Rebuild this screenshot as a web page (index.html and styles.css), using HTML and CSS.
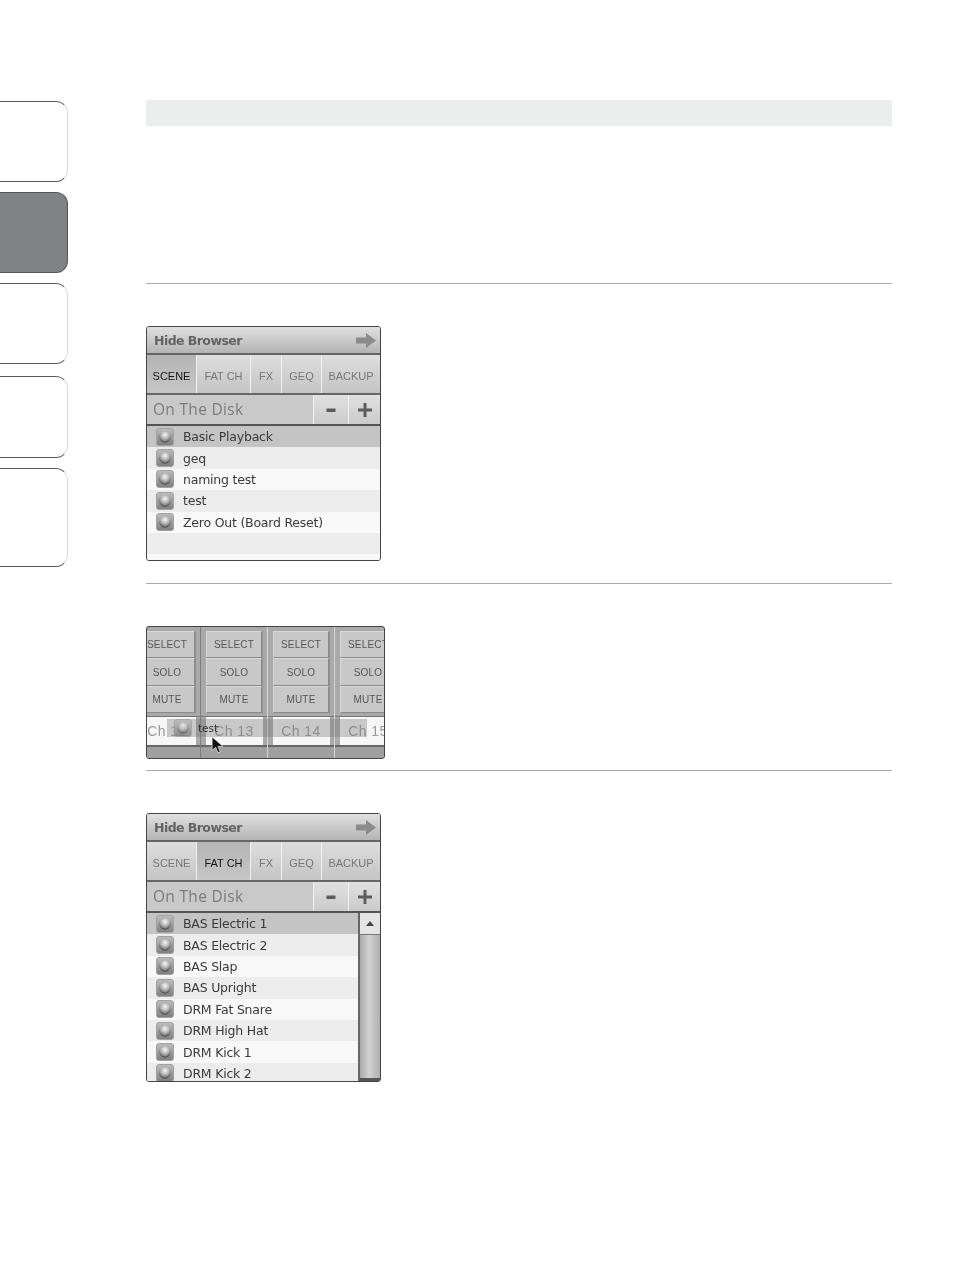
FILE: index.html
```html
<!DOCTYPE html>
<html>
<head>
    <title>Browser Panels</title>
    <link rel="stylesheet" href="styles.css">
</head>
<body>
    <svg class="defs" width="0" height="0">
        <defs>
            <linearGradient id="tile" x1="0" y1="0" x2="0" y2="1">
                <stop offset="0" stop-color="#bdbdbd"/>
                <stop offset="1" stop-color="#7d7d7d"/>
            </linearGradient>
            <radialGradient id="ball" cx="50%" cy="30%" r="72%">
                <stop offset="0" stop-color="#f6f6f6"/>
                <stop offset="0.5" stop-color="#b4b4b4"/>
                <stop offset="1" stop-color="#3a3a3a"/>
            </radialGradient>
            <symbol id="preset" viewBox="0 0 18 18">
                <rect x="0.5" y="0.5" width="17" height="17" rx="2.5" fill="url(#tile)" stroke="#a2a2a2"/>
                <circle cx="9" cy="9" r="5.800" fill="url(#ball)"/>
                <path d="M5 11a5 3.500 0 0 0 8 0a6 4.500 0 0 1-8 0z" fill="#dcdcdc"/>
            </symbol>
            <symbol id="arrow" viewBox="0 0 20 15">
                <path d="M0 4.500h10V0l10 7.500-10 7.500v-4.500H0z" fill="#8b8b8b"/>
            </symbol>
            <symbol id="minus" viewBox="0 0 14 14">
                <rect x="2.500" y="5.500" width="9" height="3.500" fill="#5c5c5c"/>
            </symbol>
            <symbol id="plus" viewBox="0 0 14 14">
                <path d="M5.500 0h3v5.500H14v3H8.500V14h-3V8.500H0v-3h5.500z" fill="#5c5c5c"/>
            </symbol>
        </defs>
    </svg>

    <div class="page">
        <div class="sidebar">
            <div class="side-tab"></div>
            <div class="side-tab active"></div>
            <div class="side-tab"></div>
            <div class="side-tab tall"></div>
            <div class="side-tab taller"></div>
        </div>

        <div class="main">
            <div class="band"></div>

            <div class="section first">
                <div class="panel short">
                    <div class="hide-bar">
                        <span>Hide Browser</span>
                        <svg class="arrow"><use href="#arrow"/></svg>
                    </div>
                    <div class="tabs">
                        <div class="tab t-scene selected">SCENE</div>
                        <div class="tab t-fat">FAT CH</div>
                        <div class="tab t-fx">FX</div>
                        <div class="tab t-geq">GEQ</div>
                        <div class="tab t-backup">BACKUP</div>
                    </div>
                    <div class="disk-bar">
                        <div class="disk-name">On The Disk</div>
                        <div class="disk-btn"><svg><use href="#minus"/></svg></div>
                        <div class="disk-btn"><svg><use href="#plus"/></svg></div>
                    </div>
                    <div class="list">
                        <div class="row current"><svg class="preset"><use href="#preset"/></svg>Basic Playback</div>
                        <div class="row"><svg class="preset"><use href="#preset"/></svg>geq</div>
                        <div class="row"><svg class="preset"><use href="#preset"/></svg>naming test</div>
                        <div class="row"><svg class="preset"><use href="#preset"/></svg>test</div>
                        <div class="row"><svg class="preset"><use href="#preset"/></svg>Zero Out (Board Reset)</div>
                        <div class="row"></div>
                        <div class="row"></div>
                    </div>
                </div>
            </div>

            <div class="section second">
                <div class="strip">
                    <div class="channels">
                        <div class="channel">
                            <div class="ch-btn">SELECT</div>
                            <div class="ch-btn">SOLO</div>
                            <div class="ch-btn">MUTE</div>
                            <div class="ch-name">Ch 12</div>
                            <div class="ch-foot"></div>
                        </div>
                        <div class="channel">
                            <div class="ch-btn">SELECT</div>
                            <div class="ch-btn">SOLO</div>
                            <div class="ch-btn">MUTE</div>
                            <div class="ch-name">Ch 13</div>
                            <div class="ch-foot"></div>
                        </div>
                        <div class="channel">
                            <div class="ch-btn">SELECT</div>
                            <div class="ch-btn">SOLO</div>
                            <div class="ch-btn">MUTE</div>
                            <div class="ch-name">Ch 14</div>
                            <div class="ch-foot"></div>
                        </div>
                        <div class="channel">
                            <div class="ch-btn">SELECT</div>
                            <div class="ch-btn">SOLO</div>
                            <div class="ch-btn">MUTE</div>
                            <div class="ch-name">Ch 15</div>
                            <div class="ch-foot"></div>
                        </div>
                    </div>
                    <!-- item being dragged over the channel names -->
                    <div class="ghost">
                        <svg class="preset"><use href="#preset"/></svg>
                        <span>test</span>
                    </div>
                    <svg class="cursor" viewBox="0 0 14 20"><path d="M1 1v15l4-3.500 2.500 6 2.500-1-2.500-6H13z" fill="#111" stroke="#e8e8e8" stroke-width="0.8"/></svg>
                </div>
            </div>

            <div class="section third">
                <div class="panel">
                    <div class="hide-bar">
                        <span>Hide Browser</span>
                        <svg class="arrow"><use href="#arrow"/></svg>
                    </div>
                    <div class="tabs">
                        <div class="tab t-scene">SCENE</div>
                        <div class="tab t-fat selected">FAT CH</div>
                        <div class="tab t-fx">FX</div>
                        <div class="tab t-geq">GEQ</div>
                        <div class="tab t-backup">BACKUP</div>
                    </div>
                    <div class="disk-bar">
                        <div class="disk-name">On The Disk</div>
                        <div class="disk-btn"><svg><use href="#minus"/></svg></div>
                        <div class="disk-btn"><svg><use href="#plus"/></svg></div>
                    </div>
                    <div class="list-wrap">
                        <div class="list">
                            <div class="row current"><svg class="preset"><use href="#preset"/></svg>BAS Electric 1</div>
                            <div class="row"><svg class="preset"><use href="#preset"/></svg>BAS Electric 2</div>
                            <div class="row"><svg class="preset"><use href="#preset"/></svg>BAS Slap</div>
                            <div class="row"><svg class="preset"><use href="#preset"/></svg>BAS Upright</div>
                            <div class="row"><svg class="preset"><use href="#preset"/></svg>DRM Fat Snare</div>
                            <div class="row"><svg class="preset"><use href="#preset"/></svg>DRM High Hat</div>
                            <div class="row"><svg class="preset"><use href="#preset"/></svg>DRM Kick 1</div>
                            <div class="row"><svg class="preset"><use href="#preset"/></svg>DRM Kick 2</div>
                        </div>
                        <div class="scrollbar">
                            <div class="scroll-up"><span class="up-tri"></span></div>
                            <div class="scroll-track"></div>
                        </div>
                    </div>
                </div>
            </div>
        </div>
    </div>
</body>
</html>
```

FILE: styles.css
```css
* {
    box-sizing: border-box;
}
html, body {
    margin: 0;
    padding: 0;
    height: 1270px;
    overflow: hidden;
    background: #fff;
}
body {
    font-family: "Open Sans", "Liberation Sans", sans-serif;
}
.defs {
    display: block;
    height: 0;
}
.page {
    display: flex;
}

/* chapter tabs down the left edge */
.sidebar {
    width: 68px;
    padding-top: 101px;
    display: flex;
    flex-direction: column;
}
.side-tab {
    height: 81px;
    margin-bottom: 10px;
    border: 1px solid #5a5a5a;
    border-left: none;
    border-right-color: #dcdcdc;
    border-radius: 0 12px 12px 0;
}
.side-tab.active {
    background: #808283;
    border-color: #555;
}
.side-tab.tall {
    height: 82px;
    margin-top: 2px;
}
.side-tab.taller {
    height: 99px;
}

.main {
    margin-left: 78px;
    width: 746px;
    padding-top: 100px;
}
.band {
    height: 26px;
    background: #eceeed;
}
.section {
    border-top: 1px solid #aaa;
    padding-top: 42px;
}
.first {
    margin-top: 157px;
    height: 300px;
}
.second {
    height: 187px;
}

/* browser panel */
.panel {
    width: 235px;
    height: 269px;
    border: 1px solid #444;
    border-radius: 3px;
    overflow: hidden;
    background: #f7f7f7;
    filter: blur(0.45px);
}
.panel.short {
    height: 235px;
}
.hide-bar {
    height: 28px;
    border-bottom: 2px solid #666;
    background: linear-gradient(#e0e0e0, #b4b4b4);
    display: flex;
    align-items: center;
    justify-content: space-between;
    padding: 0 4px 0 7px;
    font-family: "DejaVu Sans", sans-serif;
    font-weight: bold;
    font-size: 12.500px;
    letter-spacing: -0.55px;
    color: #636363;
}
.arrow {
    width: 20px;
    height: 15px;
}
.tabs {
    height: 40px;
    display: flex;
    border-bottom: 2px solid #666;
    font-family: "Liberation Sans", sans-serif;
    font-size: 11px;
    color: #777;
}
.tab {
    display: flex;
    align-items: center;
    justify-content: center;
    padding-top: 4px;
    border-right: 1px solid #f0f0f0;
    background: linear-gradient(#dedede, #c4c4c4);
}
.tab.selected {
    background: linear-gradient(#b4b4b4, #c6c6c6);
    color: #151515;
}
.t-scene {
    width: 50px;
}
.t-fat {
    width: 54px;
}
.t-fx {
    width: 31px;
}
.t-geq {
    width: 40px;
}
.t-backup {
    flex: 1;
    border-right: none;
}
.disk-bar {
    height: 31px;
    display: flex;
    border-bottom: 2px solid #555;
    background: #c9c9c9;
}
.disk-name {
    flex: 1;
    padding-left: 6px;
    font-size: 15.500px;
    line-height: 29px;
    letter-spacing: 0.3px;
    color: #7c7c7c;
}
.disk-btn {
    width: 35px;
    display: flex;
    align-items: center;
    justify-content: center;
    border-left: 1px solid #f2f2f2;
    background: linear-gradient(#e0e0e0, #cbcbcb);
}
.disk-btn:last-child {
    width: 32px;
}
.disk-btn svg {
    width: 14px;
    height: 14px;
}
.list-wrap {
    display: flex;
    height: 169px;
}
.list-wrap .list {
    flex: 1;
}
.row {
    height: 21.400px;
    display: flex;
    align-items: center;
    padding-left: 9px;
    font-family: "DejaVu Sans", sans-serif;
    font-size: 12.500px;
    letter-spacing: -0.22px;
    color: #3a3a3a;
    overflow: hidden;
}
.row:nth-child(even) {
    background: #ececec;
}
.row:nth-child(odd) {
    background: #f8f8f8;
}
.row.current {
    background: #c4c4c4;
}
.preset {
    width: 18px;
    height: 18px;
    margin-right: 9px;
    flex: none;
}
.scrollbar {
    width: 22px;
    display: flex;
    flex-direction: column;
    border-left: 2px solid #666;
}
.scroll-up {
    height: 22px;
    background: #e4e4e4;
    border-bottom: 1px solid #777;
    display: flex;
    align-items: center;
    justify-content: center;
}
.up-tri {
    width: 0;
    height: 0;
    border-left: 4px solid transparent;
    border-right: 4px solid transparent;
    border-bottom: 5px solid #444;
}
.scroll-track {
    flex: 1;
    background: linear-gradient(90deg, #aaa, #d2d2d2 45%, #b0b0b0);
    border-bottom: 4px solid #555;
}

/* channel strip */
.strip {
    position: relative;
    width: 239px;
    height: 133px;
    border: 1px solid #444;
    border-radius: 3px;
    overflow: hidden;
    background: #a9a9a9;
    filter: blur(0.45px);
}
.channels {
    display: flex;
    margin-left: -13px;
}
.channel {
    width: 67px;
    flex: none;
    padding-top: 4px;
    border-right: 1px solid #7e7e7e;
    font-family: "Liberation Sans", sans-serif;
    font-size: 10px;
    color: #555;
}
.channel:nth-child(n+2) {
    border-right-color: #d8d8d8;
}
.ch-btn {
    width: 56px;
    height: 27.400px;
    margin-left: 5px;
    display: flex;
    align-items: center;
    justify-content: center;
    letter-spacing: 0.2px;
    background: #c8c8c8;
    border: 1px solid #d8d8d8;
    border-right-color: #8a8a8a;
    border-bottom-color: #8a8a8a;
    box-shadow: 1px 0 0 #8f8f8f;
}
.ch-name {
    height: 29px;
    margin-top: 3px;
    border-top: 1px solid #777;
    background: linear-gradient(90deg, #a9a9a9 5px, #f6f6f6 5px, #f6f6f6 62px, #a9a9a9 62px);
    font-size: 14px;
    line-height: 29px;
    letter-spacing: 0.4px;
    text-align: center;
    color: #9a9a9a;
}
.ch-foot {
    height: 14px;
    border-top: 2px solid #666;
    background: #a0a0a0;
}
.ghost {
    position: absolute;
    left: 20px;
    top: 92px;
    width: 200px;
    height: 18px;
    background: rgba(120, 120, 120, 0.36);
    font-family: "DejaVu Sans", sans-serif;
    font-size: 10.500px;
    color: #333;
}
.ghost .preset {
    position: absolute;
    left: 7px;
    top: 0;
    opacity: 0.8;
}
.ghost span {
    position: absolute;
    left: 31px;
    top: 3px;
}
.cursor {
    position: absolute;
    left: 64px;
    top: 109px;
    width: 13px;
    height: 18px;
}
```
